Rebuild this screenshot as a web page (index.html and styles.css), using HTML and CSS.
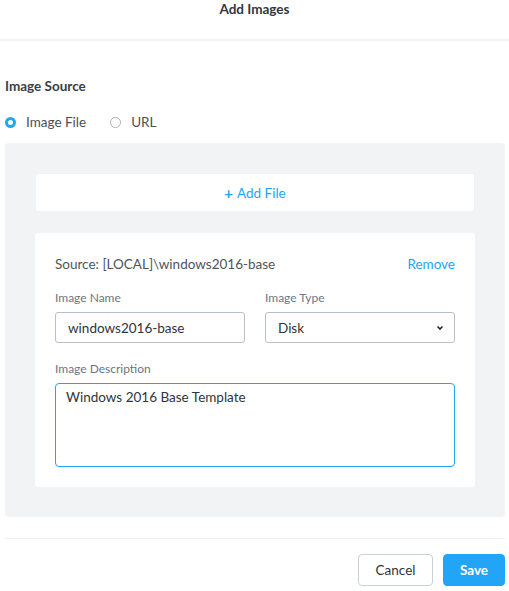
FILE: index.html
```html
<!DOCTYPE html>
<html>
<head>
<meta charset="utf-8">
<link rel="stylesheet" href="styles.css">
</head>
<body>
<div class="modal">
  <header class="head">Add Images</header>
  <main class="body">
    <div class="section-title">Image Source</div>
    <div class="radios">
      <label class="radio"><span class="dot on"></span>Image File</label>
      <label class="radio"><span class="dot"></span>URL</label>
    </div>
    <div class="panel">
      <div class="add-file"><span class="plus">+</span> Add File</div>
      <div class="card">
        <div class="source-row">
          <span class="source">Source: [LOCAL]\windows2016-base</span>
          <span class="remove">Remove</span>
        </div>
        <div class="grid">
          <div class="field">
            <div class="label">Image Name</div>
            <div class="input">windows2016-base</div>
          </div>
          <div class="field">
            <div class="label">Image Type</div>
            <div class="input select">Disk
              <svg class="chev" width="8" height="6" viewBox="0 0 8 6"><path d="M1.5 1.5 L4 4 L6.5 1.5" fill="none" stroke="#22272e" stroke-width="1.6"/></svg>
            </div>
          </div>
        </div>
        <div class="label">Image Description</div>
        <div class="textarea">Windows 2016 Base Template</div>
      </div>
    </div>
  </main>
  <footer class="foot">
    <button class="btn cancel">Cancel</button>
    <button class="btn save">Save</button>
  </footer>
</div>
</body>
</html>
```
FILE: styles.css
```css
* { box-sizing: border-box; }
html, body { margin: 0; padding: 0; background: #fff; }
body {
  font-family: "Lato", "Open Sans", sans-serif;
  color: #22272e;
  font-size: 13.5px;
  width: 509px;
}
.head {
  height: 41px;
  border-bottom: 2px solid #f1f2f4;
  text-align: center;
  font-size: 13.5px;
  font-weight: 700;
  padding-top: 1px;
  line-height: 17px;
  color: #33373e;
}
.body { padding: 0 4px 0 5px; }
.section-title {
  margin-top: 37px;
  font-size: 13.5px;
  font-weight: 700;
  line-height: 17px;
  color: #3a3e45;
}
.radios {
  display: flex;
  gap: 24px;
  margin-top: 19px;
  line-height: 17px;
}
.radio { display: flex; align-items: center; gap: 10px; font-size: 13.5px; color: #4a5058; }
.dot {
  width: 11px; height: 11px; border-radius: 50%;
  border: 1px solid #a9b1bd;
  background: #fff;
}
.dot.on {
  border: 3px solid #22a5f7;
  background: #fff;
}
.panel {
  margin-top: 12px;
  background: #f2f3f5;
  border-radius: 4px;
  padding: 31px 30px 30px 30px;
  height: 374px;
}
.add-file {
  background: #fff;
  border-radius: 3px;
  height: 37px;
  margin: 0 1px;
  display: flex;
  align-items: center;
  justify-content: center;
  color: #22a5f7;
  font-size: 13.5px;
  gap: 4px;
}
.plus { font-weight: 700; font-size: 15px; }
.card {
  margin-top: 22px;
  background: #fff;
  border-radius: 3px;
  padding: 23px 20px 20px 20px;
  height: 254px;
}
.source-row { display: flex; justify-content: space-between; line-height: 17px; }
.source { color: #4f545b; }
.remove { color: #22a5f7; }
.grid {
  display: grid;
  grid-template-columns: 1fr 1fr;
  gap: 20px;
  margin-top: 17px;
}
.label { font-size: 12px; color: #6b7686; line-height: 15px; margin-bottom: 7px; }
.input {
  height: 31px;
  border: 1px solid #b8c0cb;
  border-radius: 3px;
  display: flex;
  align-items: center;
  padding: 0 12px;
  color: #30343b;
}
.select { justify-content: space-between; padding-right: 10px; }
.grid + .label { margin-top: 18px; }
.textarea {
  height: 84px;
  border: 1px solid #22a5f7;
  border-radius: 4px;
  padding: 5px 10px;
  line-height: 17px;
  color: #30343b;
}
.foot {
  margin: 21px 4px 0 5px;
  border-top: 1px solid #eef0f2;
  padding-top: 15px;
  display: flex;
  justify-content: flex-end;
  gap: 10px;
}
.btn {
  font-family: inherit;
  font-size: 13.5px;
  height: 32px;
  border-radius: 4px;
  cursor: pointer;
}
.cancel {
  width: 75px;
  background: #fff;
  border: 1px solid #c9d0d8;
  color: #30343b;
}
.save {
  width: 62px;
  background: #22a5f7;
  border: 1px solid #22a5f7;
  color: #fff;
  font-weight: 700;
}
```
